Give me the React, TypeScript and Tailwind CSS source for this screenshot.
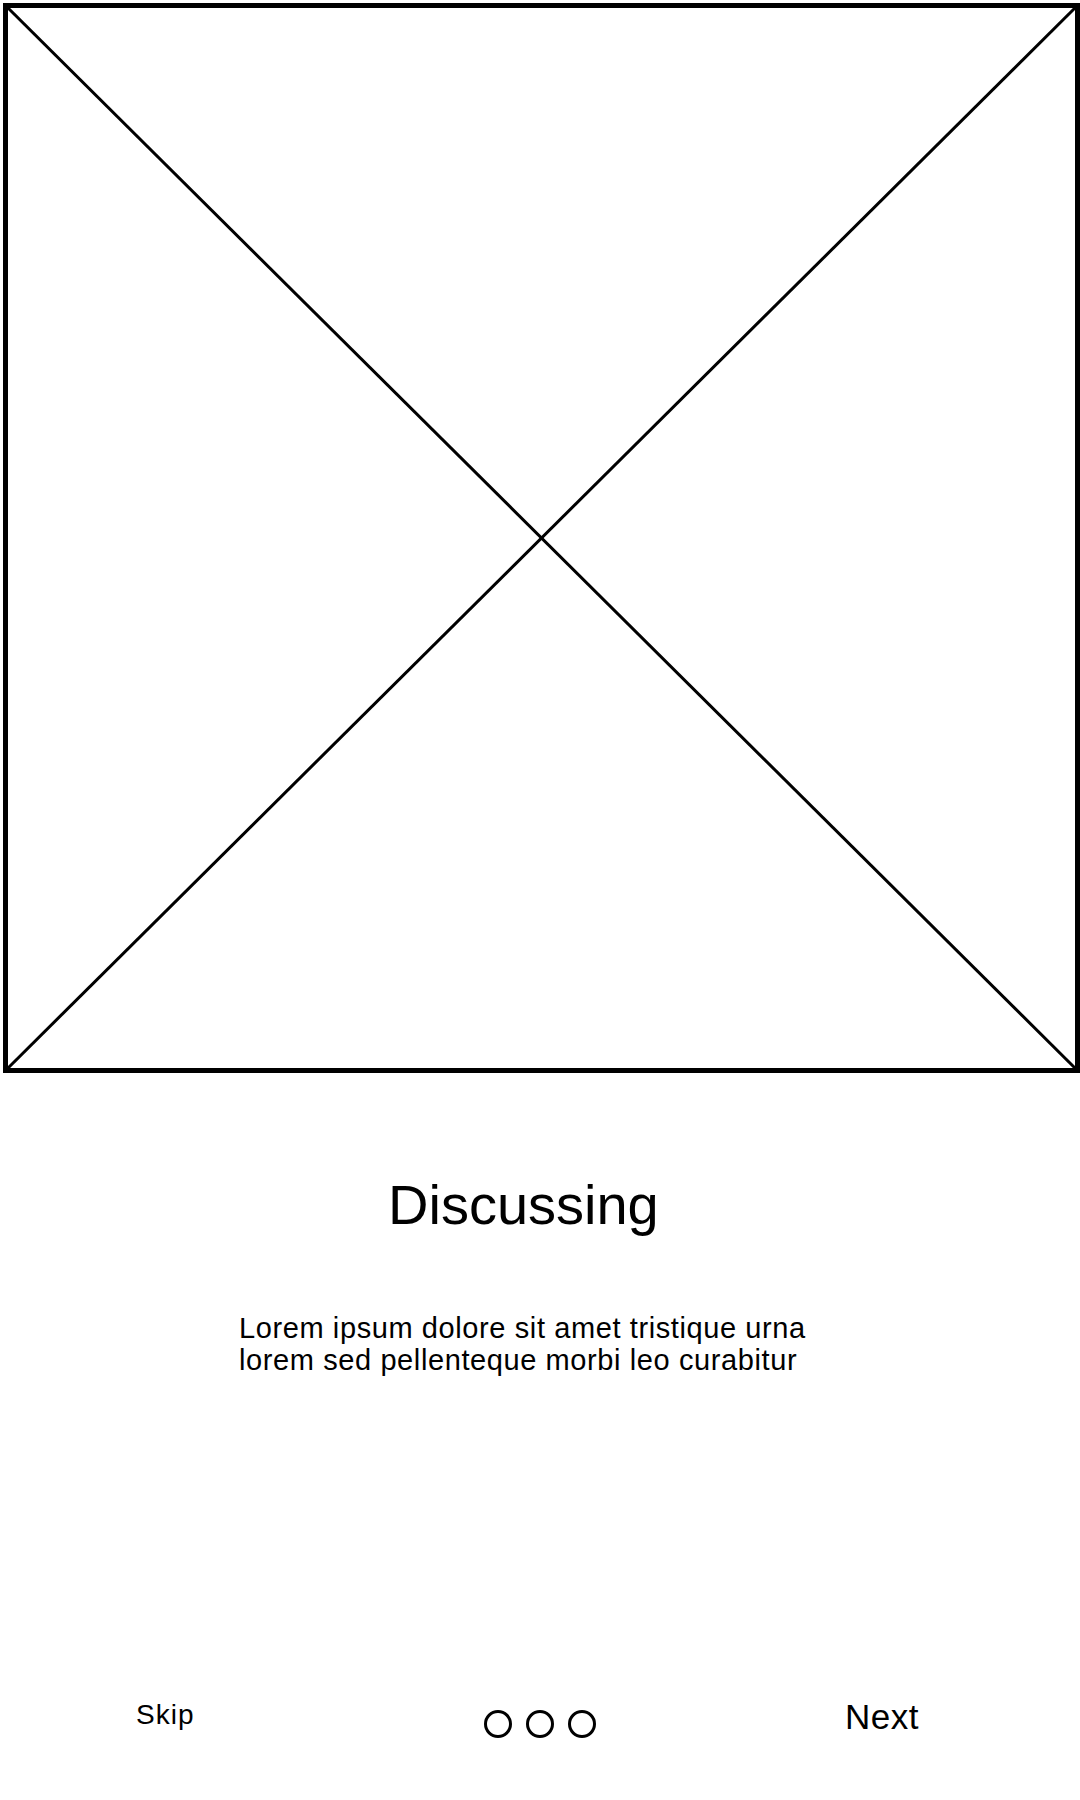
import React from 'react';

const Placeholder: React.FC = () => (
  <div className="ml-[3px] mt-[3px] w-[1077px] h-[1070px] border-[5px] border-black">
    <svg className="w-full h-full block" viewBox="0 0 100 100" preserveAspectRatio="none">
      <line x1="0" y1="0" x2="100" y2="100" stroke="black" strokeWidth="3" vectorEffect="non-scaling-stroke" />
      <line x1="100" y1="0" x2="0" y2="100" stroke="black" strokeWidth="3" vectorEffect="non-scaling-stroke" />
    </svg>
  </div>
);

const Dots: React.FC = () => (
  <div className="flex gap-[14px] mt-[11px] w-[113px]">
    <span className="w-[28px] h-[28px] rounded-full border-[3px] border-black" />
    <span className="w-[28px] h-[28px] rounded-full border-[3px] border-black" />
    <span className="w-[28px] h-[28px] rounded-full border-[3px] border-black" />
  </div>
);

const App: React.FC = () => {
  return (
    <div className="w-[1080px] h-[1800px] bg-white text-black font-['Liberation_Sans',Arial,sans-serif] overflow-hidden">
      <Placeholder />

      <h1 className="mt-[104px] pl-[388px] text-[56px] leading-[56px] font-normal">Discussing</h1>

      <p className="mt-[79px] pl-[239px] text-[29px] leading-[32px] tracking-[0.6px]">
        Lorem ipsum dolore sit amet tristique urna
        <br />
        lorem sed pellenteque morbi leo curabitur
      </p>

      <div className="mt-[323px] flex items-start">
        <button type="button" className="ml-[136px] w-[348px] mt-[2px] text-left text-[28px] leading-[28px] tracking-[1px]">
          Skip
        </button>
        <Dots />
        <button type="button" className="ml-[248px] text-[35px] leading-[35px] tracking-[0.5px]">
          Next
        </button>
      </div>
    </div>
  );
};

export default App;
